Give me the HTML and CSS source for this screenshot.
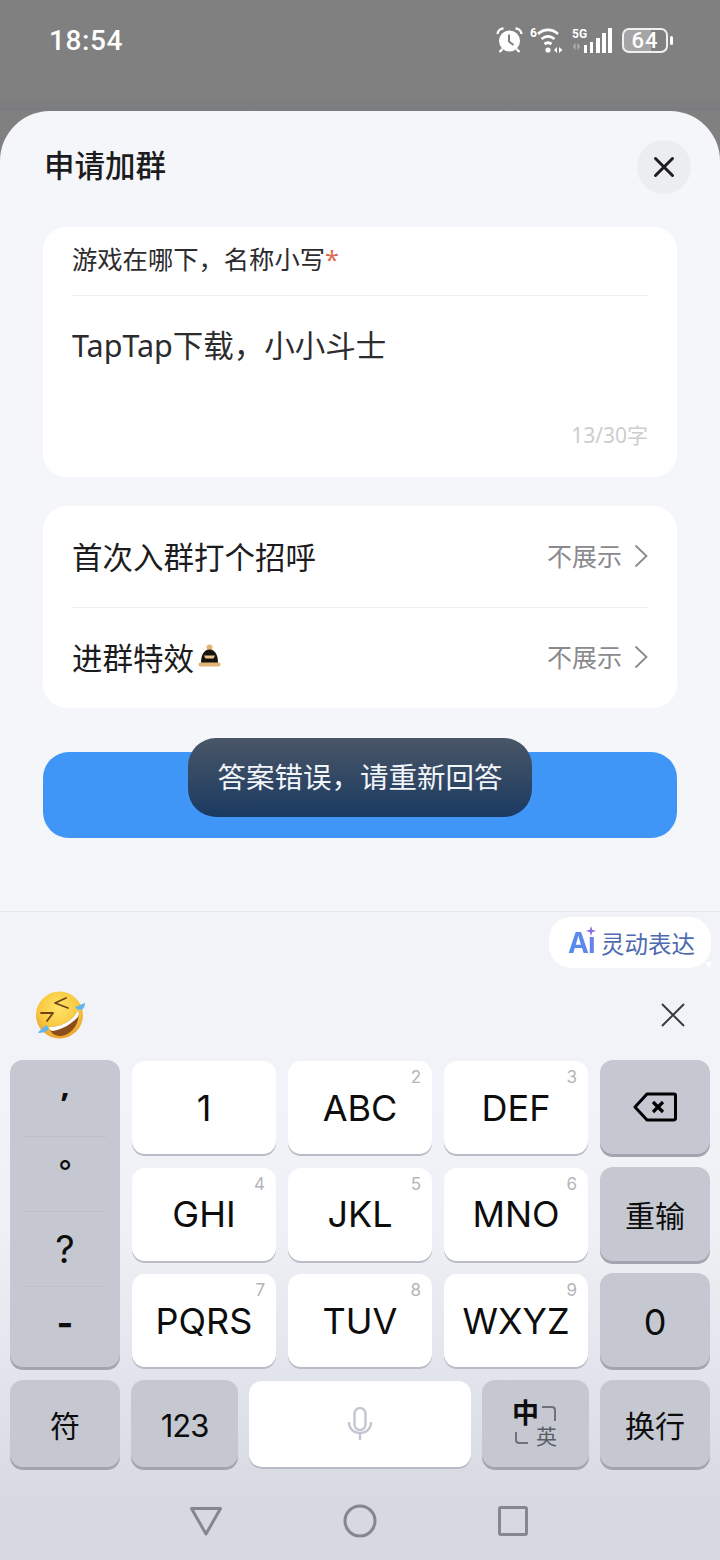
FILE: index.html
```html
<!DOCTYPE html>
<html lang="zh-CN">
<head>
    <meta charset="UTF-8">
    <meta name="viewport" content="width=device-width, initial-scale=1.0">
    <title>申请加群</title>
    <link rel="stylesheet" href="styles.css">
</head>
<body>
    <div class="statusbar">
        <span class="time">18:54</span>
        <div class="status-icons">
            <svg width="27" height="26" viewBox="0 0 27 26">
                <circle cx="13.500" cy="14" r="10.500" fill="#fff"/>
                <path d="M13 7.500v7l4.500 3.500" fill="none" stroke="#808080" stroke-width="2"/>
                <path d="M1.500 7a6 6 0 0 1 6-5.500M25.500 7a6 6 0 0 0-6-5.500M6.500 22l-3 3M20.500 22l3 3" fill="none" stroke="#fff" stroke-width="2.400"/>
            </svg>
            <svg width="36" height="27" viewBox="0 0 36 27">
                <text x="0" y="10" class="ic-small">6</text>
                <path d="M8 7c6-5.500 14-5.500 20 0M11.500 12c4-3.200 9-3.200 13 0M14.500 17c2.200-1.600 4.800-1.600 7 0" fill="none" stroke="#fff" stroke-width="2.800"/>
                <circle cx="18" cy="23" r="2.600" fill="#fff"/>
                <path d="M27 20v6l-3-3zM29 20v6l3.500-3z" fill="#fff"/>
            </svg>
            <svg class="ic-signal" width="42" height="27" viewBox="0 0 42 27">
                <text x="0" y="11" class="ic-small">5G</text>
                <path d="M3.500 16v7l-2.500-3.500zM5.500 16v7l2.500-3.500z" fill="#b4b4b4"/>
                <rect x="12" y="18" width="3" height="8" fill="#fff"/>
                <rect x="18" y="15" width="3" height="11" fill="#fff"/>
                <rect x="24" y="11" width="4" height="15" fill="#fff"/>
                <rect x="30" y="6" width="4" height="20" fill="#fff"/>
                <rect x="36" y="1" width="4" height="25" fill="#fff"/>
            </svg>
            <div class="battery">
                <span class="battery-body">64</span>
                <span class="battery-tip"></span>
            </div>
        </div>
    </div>

    <div class="sheet">
        <div class="sheet-head">
            <h1>申请加群</h1>
            <button class="close-btn">
                <svg width="22" height="22" viewBox="0 0 22 22"><path d="M2.500 2.500l17 17M19.500 2.500l-17 17" stroke="#1c1c1e" stroke-width="3" stroke-linecap="round"/></svg>
            </button>
        </div>

        <div class="card question">
            <div class="q-label">游戏在哪下，名称小写<span class="req">*</span></div>
            <div class="q-answer">TapTap下载，小小斗士</div>
            <div class="q-count">13/30字</div>
        </div>

        <div class="card options">
            <div class="opt-row">
                <span class="opt-name">首次入群打个招呼</span>
                <span class="opt-val">不展示</span>
                <svg width="14" height="24" viewBox="0 0 14 24"><path d="M1.500 1.500L12.500 12L1.500 22.500" fill="none" stroke="#8a8a8e" stroke-width="1.800"/></svg>
            </div>
            <div class="opt-row">
                <span class="opt-name">进群特效</span>
                <svg class="ic-hat" width="23" height="24" viewBox="0 0 23 24">
                    <circle cx="11.500" cy="3.500" r="3" fill="#e2b478"/>
                    <path d="M3 19c0-9 3.500-13.500 8.500-13.500S20 10 20 19z" fill="#17140f"/>
                    <path d="M6 11.500h11l-1.500 3h-8z" fill="#e9c58f"/>
                    <rect x="0.500" y="18.500" width="22" height="4" rx="2" fill="#e2b478"/>
                </svg>
                <span class="opt-val">不展示</span>
                <svg width="14" height="24" viewBox="0 0 14 24"><path d="M1.500 1.500L12.500 12L1.500 22.500" fill="none" stroke="#8a8a8e" stroke-width="1.800"/></svg>
            </div>
        </div>

        <div class="submit"></div>
        <div class="toast">答案错误，请重新回答</div>
    </div>

    <div class="keyboard">
        <div class="ai-row">
            <div class="ai-pill">
                <span class="ai-mark">Aı</span>
                <svg class="ai-star" width="10" height="10" viewBox="0 0 10 10"><path d="M5 0l1.200 3.800L10 5 6.200 6.200 5 10 3.800 6.200 0 5l3.800-1.200z" fill="#8a6fe0"/></svg>
                <span class="ai-text">灵动表达</span>
            </div>
            <svg class="ai-tail" width="6" height="8" viewBox="0 0 6 8"><path d="M0 0h6L5 7z" fill="#fff"/></svg>
        </div>
        <div class="tool-row">
            <svg width="54" height="52" viewBox="0 0 54 52">
                <defs>
                    <radialGradient id="face" cx="48%" cy="35%" r="70%">
                        <stop offset="0" stop-color="#ffe468"/>
                        <stop offset="0.6" stop-color="#f8c840"/>
                        <stop offset="1" stop-color="#e8982a"/>
                    </radialGradient>
                </defs>
                <circle cx="26.500" cy="26" r="23.500" fill="url(#face)"/>
                <path d="M16 38C28 38 40 32 45 21c3 13-7 26-18 26-6 0-10-4-11-9z" fill="#8a4e1c"/>
                <path d="M16 38C28 38 40 32 45 21c1 3 1 6-1 8-7 7-16 12-25 13-2-1-3-2-3-4z" fill="#fff"/>
                <path d="M8 24l12 0-6 8M33 9l-11 5 13 5" fill="none" stroke="#6f4314" stroke-width="1.800" stroke-linecap="round" stroke-linejoin="round"/>
                <path d="M42 18l10-4c0 4-2 7-5 7-2 0-4-1-5-3zM13 36c-2 3-6 4-8 8 4 0 8-1 10-3 1-2 0-4-2-5z" fill="#62b6ec"/>
            </svg>
            <svg width="24" height="24" viewBox="0 0 24 24"><path d="M1 1l22 22M23 1L1 23" stroke="#3a3a3c" stroke-width="2"/></svg>
        </div>

        <div class="keys">
            <div class="key-col">
                <div class="punct p-comma">,</div>
                <div class="punct p-dot">°</div>
                <div class="punct p-ask">?</div>
                <div class="punct p-dash">-</div>
            </div>
            <div class="key light">1</div>
            <div class="key light">ABC<sup>2</sup></div>
            <div class="key light">DEF<sup>3</sup></div>
            <div class="key dark">
                <svg width="44" height="30" viewBox="0 0 44 30">
                    <path d="M14 2h27a1.500 1.500 0 0 1 1.500 1.500v23a1.500 1.500 0 0 1-1.500 1.500H14L2 15z" fill="none" stroke="#000" stroke-width="3" stroke-linejoin="round"/>
                    <path d="M20 10l10 10M30 10L20 20" stroke="#000" stroke-width="3.200"/>
                </svg>
            </div>
            <div class="key light">GHI<sup>4</sup></div>
            <div class="key light">JKL<sup>5</sup></div>
            <div class="key light">MNO<sup>6</sup></div>
            <div class="key dark cjk">重输</div>
            <div class="key light">PQRS<sup>7</sup></div>
            <div class="key light">TUV<sup>8</sup></div>
            <div class="key light">WXYZ<sup>9</sup></div>
            <div class="key dark zero">0</div>
        </div>

        <div class="bottom-keys">
            <div class="key dark cjk">符</div>
            <div class="key dark num-small">123</div>
            <div class="key light">
                <svg width="26" height="34" viewBox="0 0 26 34">
                    <rect x="7.500" y="1" width="11" height="22" rx="5.500" fill="none" stroke="#c4c7d0" stroke-width="2.400"/>
                    <path d="M2 15c0 7 5 11 11 11s11-4 11-11M13 26v7" fill="none" stroke="#c4c7d0" stroke-width="2.400"/>
                </svg>
            </div>
            <div class="key dark lang">
                <span class="lang-zh">中</span>
                <span class="lang-en">英</span>
                <span class="lang-tr"></span>
                <span class="lang-bl"></span>
            </div>
            <div class="key dark cjk">换行</div>
        </div>

        <div class="navbar">
            <svg width="34" height="30" viewBox="0 0 34 30"><path d="M2.500 2.500h29L17 28z" fill="none" stroke="#85878c" stroke-width="3" stroke-linejoin="round"/></svg>
            <svg width="34" height="34" viewBox="0 0 34 34"><circle cx="17" cy="17" r="15" fill="none" stroke="#85878c" stroke-width="3"/></svg>
            <svg width="32" height="32" viewBox="0 0 32 32"><rect x="2.500" y="2.500" width="27" height="27" rx="1.500" fill="none" stroke="#85878c" stroke-width="3"/></svg>
        </div>
    </div>
</body>
</html>
```

FILE: styles.css
```css
* {
    box-sizing: border-box;
}

body {
    width: 720px;
    height: 1560px;
    margin: 0;
    overflow: hidden;
    background-color: #808080;
    color: #1c1c1e;
    font-family: "Noto Sans", "Noto Sans CJK SC", sans-serif;
}

/* status bar */
.statusbar {
    height: 111px;
    padding: 21px 47px 0 49px;
    display: flex;
    justify-content: space-between;
    align-items: flex-start;
    background: linear-gradient(#808080 88%, #7b7c80);
}

.time {
    padding-top: 1px;
    color: #fff;
    font-family: Roboto, sans-serif;
    font-size: 28px;
    font-weight: 500;
    line-height: 38px;
    letter-spacing: 0.6px;
}

.status-icons {
    display: flex;
    align-items: center;
    gap: 7px;
    height: 38px;
}

.ic-small {
    fill: #fff;
    font-family: Roboto, sans-serif;
    font-size: 12px;
    font-weight: 700;
}

.ic-signal {
    margin-left: -1px;
}

.battery {
    display: flex;
    align-items: center;
    margin-left: 1px;
}

.battery-body {
    width: 46px;
    height: 25px;
    border: 2px solid #f0f0f0;
    border-radius: 7px;
    background: linear-gradient(90deg, #a5a5a5 64%, transparent 64%);
    color: #fff;
    font-family: Roboto, sans-serif;
    font-size: 22px;
    font-weight: 500;
    line-height: 21px;
    letter-spacing: 1px;
    text-align: center;
}

.battery-tip {
    width: 3px;
    height: 9px;
    margin-left: 2px;
    border-radius: 2px;
    background-color: #fff;
}

/* bottom sheet */
.sheet {
    position: relative;
    height: 800px;
    padding: 0 43px;
    background-color: #f4f6fa;
    border-radius: 50px 50px 0 0;
}

.sheet-head {
    height: 116px;
    display: flex;
    justify-content: space-between;
    align-items: flex-start;
}

.sheet-head h1 {
    margin: 33px 0 0 1px;
    font-size: 30.500px;
    font-weight: 500;
    line-height: 42px;
}

.close-btn {
    width: 54px;
    height: 54px;
    margin: 29px -14px 0 0;
    padding: 0;
    display: flex;
    align-items: center;
    justify-content: center;
    border: none;
    border-radius: 50%;
    background-color: #ecedf1;
}

.card {
    background-color: #fff;
    border-radius: 24px;
    padding: 0 29px;
}

.question {
    height: 250px;
}

.q-label {
    height: 69px;
    border-bottom: 1px solid #eeeff2;
    font-size: 25.300px;
    line-height: 65px;
    color: #2c2c2e;
}

.req {
    color: #dc6a55;
}

.q-answer {
    margin-top: 26px;
    height: 65px;
    font-size: 30.500px;
    line-height: 46px;
    color: #2c2c2e;
}

.q-count {
    margin-top: 31px;
    font-size: 21px;
    line-height: 34px;
    text-align: right;
    color: #cdcdcf;
}

.options {
    height: 202px;
    margin-top: 29px;
}

.opt-row {
    height: 101px;
    padding-bottom: 2px;
    display: flex;
    align-items: center;
}

.opt-row + .opt-row {
    border-top: 1px solid #eeeff2;
}

.opt-name {
    font-size: 30.500px;
    color: #1c1c1e;
}

.ic-hat {
    margin: -2px 0 0 4px;
}

.opt-val {
    margin: -2px 12px 0 auto;
    font-size: 25px;
    color: #8a8a8e;
}

.submit {
    height: 86px;
    margin-top: 44px;
    border-radius: 26px;
    background-color: #4096f7;
}

.toast {
    position: absolute;
    top: 627px;
    left: 188px;
    width: 344px;
    height: 79px;
    border-radius: 28px;
    background: linear-gradient(#4a5666, #1a3a62);
    color: #f2f5f9;
    font-size: 28.500px;
    line-height: 78px;
    text-align: center;
}

/* keyboard */
.keyboard {
    height: 649px;
    padding: 0 10px;
    border-top: 1px solid #e6e8ed;
    background: linear-gradient(#f1f3f8 30%, #eef0f5 50%, #d6d9e1 92%);
}

.ai-row {
    position: relative;
    display: flex;
    justify-content: flex-end;
    padding-top: 5px;
    margin-right: -1px;
}

.ai-pill {
    position: relative;
    width: 162px;
    height: 51px;
    display: flex;
    align-items: center;
    padding-left: 19px;
    border-radius: 22px;
    background-color: #fff;
}

.ai-mark {
    width: 33px;
    background: linear-gradient(90deg, #4f8ff0, #6f7de6);
    -webkit-background-clip: text;
    background-clip: text;
    color: transparent;
    font-family: Inter, sans-serif;
    font-size: 28px;
    font-weight: 700;
    letter-spacing: -1px;
}

.ai-star {
    position: absolute;
    top: 9px;
    left: 37px;
}

.ai-text {
    color: #4e6ab0;
    font-size: 23.500px;
}

.ai-tail {
    position: absolute;
    right: 0;
    bottom: -2px;
}

.tool-row {
    height: 92px;
    display: flex;
    justify-content: space-between;
    align-items: center;
    padding: 2px 25px 0 23px;
}

.keys {
    display: grid;
    grid-template-columns: 110px 144px 144px 144px 110px;
    grid-auto-rows: 94px;
    gap: 12.500px 12px;
    height: 309px;
}

.key {
    position: relative;
    display: flex;
    align-items: center;
    justify-content: center;
    border-radius: 13px;
    color: #0d0d0d;
    font-family: Inter, "Noto Sans CJK SC", sans-serif;
    font-size: 36px;
}

.key.zero {
    padding-top: 3px;
}

.key.num-small {
    padding-top: 3px;
    font-size: 31px;
    letter-spacing: -1px;
}

.key.light {
    margin-top: 1px;
    background-color: #fff;
    box-shadow: 0 2px 0 #b9bcc6;
}

.key.dark {
    background-color: #c5c8d1;
    box-shadow: 0 3px 0 #a2a5af;
}

.key.cjk {
    font-family: "Noto Sans CJK SC", sans-serif;
    font-size: 30px;
}

.key sup {
    position: absolute;
    top: 6px;
    right: 11px;
    color: #b4b5ba;
    font-size: 17px;
    line-height: 20px;
}

.key-col {
    grid-row: span 3;
    display: flex;
    flex-direction: column;
    border-radius: 13px;
    background-color: #c5c8d1;
    box-shadow: 0 3px 0 #a2a5af;
}

.punct {
    height: 75px;
    margin: 0 14px;
    display: flex;
    align-items: center;
    justify-content: center;
    color: #0d0d0d;
    font-family: Inter, sans-serif;
    font-size: 33px;
}

.punct + .punct {
    border-top: 1px solid #bcbfc9;
}

.p-comma {
    height: 76px;
    padding-bottom: 28px;
    font-family: "Noto Sans", sans-serif;
    font-size: 32px;
    font-weight: 700;
}

.p-dot {
    padding-bottom: 6px;
    font-size: 30px;
}

.p-ask {
    font-size: 38px;
}

.p-dash {
    flex: 1;
    padding-bottom: 8px;
    font-size: 36px;
    font-weight: 700;
}

.bottom-keys {
    display: grid;
    grid-template-columns: 110px 107px 222px 107px 110px;
    grid-auto-rows: 87px;
    gap: 11px;
    margin-top: 11px;
}

.lang-zh {
    position: absolute;
    top: 15px;
    left: 30px;
    font-family: "Noto Sans CJK SC", sans-serif;
    font-size: 27px;
    font-weight: 700;
    line-height: 34px;
}

.lang-en {
    position: absolute;
    top: 41px;
    left: 54px;
    color: #5c5e66;
    font-family: "Noto Sans CJK SC", sans-serif;
    font-size: 21px;
    line-height: 28px;
}

.lang-tr {
    position: absolute;
    top: 26px;
    left: 60px;
    width: 14px;
    height: 15px;
    border-top: 2px solid #70727a;
    border-right: 2px solid #70727a;
    border-top-right-radius: 4px;
}

.lang-bl {
    position: absolute;
    top: 52px;
    left: 33px;
    width: 13px;
    height: 12px;
    border-bottom: 2px solid #70727a;
    border-left: 2px solid #70727a;
    border-bottom-left-radius: 4px;
}

.navbar {
    display: flex;
    align-items: center;
    justify-content: center;
    gap: 120px;
    height: 93px;
    padding: 15px 2px 0 0;
}
```
